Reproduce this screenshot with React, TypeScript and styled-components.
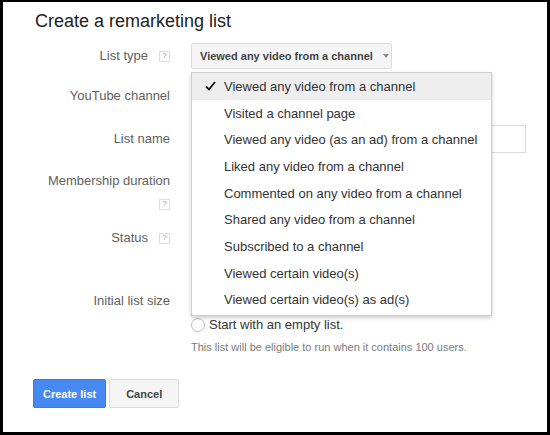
import React from "react";
import styled, { createGlobalStyle } from "styled-components";

const GlobalStyle = createGlobalStyle`
  html, body {
    margin: 0;
    padding: 0;
    background: #000;
  }
  body {
    font-family: "Liberation Sans", Arial, sans-serif;
  }
`;

const Frame = styled.div`
  width: 550px;
  height: 435px;
  box-sizing: border-box;
  border-style: solid;
  border-color: #000;
  border-width: 2px 3px 3px 3px;
  background: #fff;
  padding: 8px 0 0 30px;
  display: flex;
  flex-direction: column;
`;

const Title = styled.h1`
  margin: 0 0 0 2px;
  font-size: 18px;
  font-weight: normal;
  line-height: 22px;
  color: #222;
`;

const Row = styled.div<{ $h: number; $mt: number }>`
  display: grid;
  grid-template-columns: 137px 335px;
  column-gap: 21px;
  align-items: center;
  height: ${(p) => p.$h}px;
  margin-top: ${(p) => p.$mt}px;
`;

const Label = styled.div<{ $stack?: boolean }>`
  display: flex;
  flex-direction: ${(p) => (p.$stack ? "column" : "row")};
  align-items: ${(p) => (p.$stack ? "flex-end" : "center")};
  justify-content: flex-end;
  gap: ${(p) => (p.$stack ? "10px" : "11px")};
  font-size: 13px;
  line-height: 16px;
  color: #616161;
  text-align: right;
`;

const Help = styled.span`
  display: inline-flex;
  align-items: center;
  justify-content: center;
  width: 11px;
  height: 11px;
  box-sizing: border-box;
  border: 1px solid #dedede;
  font-size: 8px;
  line-height: 1;
  color: #9a9a9a;
`;

const Field = styled.div`
  position: relative;
  display: flex;
  align-items: center;
  height: 100%;
`;

const Select = styled.div`
  display: inline-flex;
  align-items: center;
  gap: 10px;
  width: 201px;
  height: 26px;
  box-sizing: border-box;
  padding: 0 6px 0 8px;
  border: 1px solid #dcdcdc;
  border-radius: 2px;
  background: #f5f5f5;
  font-size: 11px;
  font-weight: bold;
  color: #444;
  white-space: nowrap;
`;

const Arrow = styled.span`
  width: 0;
  height: 0;
  border-left: 3px solid transparent;
  border-right: 3px solid transparent;
  border-top: 4px solid #8a8a8a;
`;

const Menu = styled.ul`
  position: absolute;
  top: calc(100% + 3px);
  left: 0;
  z-index: 10;
  width: 301px;
  box-sizing: border-box;
  margin: 0;
  padding: 0 0 2px;
  list-style: none;
  background: #fff;
  border: 1px solid #cfcfcf;
  box-shadow: 0 2px 4px rgba(0, 0, 0, 0.2);
`;

const Item = styled.li<{ $active?: boolean }>`
  position: relative;
  display: flex;
  align-items: center;
  height: 26.7px;
  padding-left: 32px;
  font-size: 13px;
  color: #333;
  white-space: nowrap;
  background: ${(p) => (p.$active ? "#eeeeee" : "transparent")};
`;

const Check = styled.svg`
  position: absolute;
  left: 13px;
  top: 8px;
`;

const TextInput = styled.div`
  width: 335px;
  height: 28px;
  box-sizing: border-box;
  border: 1px solid #dcdcdc;
  background: #fff;
`;

const Radio = styled.span`
  width: 14px;
  height: 14px;
  box-sizing: border-box;
  border: 1px solid #bdbdbd;
  border-radius: 50%;
  background: #fff;
  margin-right: 4px;
`;

const RadioText = styled.span`
  font-size: 13px;
  color: #333;
`;

const Hint = styled.div`
  font-size: 11px;
  line-height: 14px;
  color: #7a7a7a;
  white-space: nowrap;
`;

const Buttons = styled.div`
  display: flex;
  gap: 3px;
  margin-top: 25px;
`;

const Button = styled.button<{ $primary?: boolean }>`
  height: 29px;
  padding: 0 9px;
  box-sizing: border-box;
  border-radius: 2px;
  border: 1px solid ${(p) => (p.$primary ? "#3a7be6" : "#dcdcdc")};
  background: ${(p) => (p.$primary ? "#4689f3" : "#f5f5f5")};
  color: ${(p) => (p.$primary ? "#fff" : "#444")};
  font-family: inherit;
  font-size: 11px;
  font-weight: bold;
  min-width: ${(p) => (p.$primary ? "71px" : "70px")};
`;

const options = [
  "Viewed any video from a channel",
  "Visited a channel page",
  "Viewed any video (as an ad) from a channel",
  "Liked any video from a channel",
  "Commented on any video from a channel",
  "Shared any video from a channel",
  "Subscribed to a channel",
  "Viewed certain video(s)",
  "Viewed certain video(s) as ad(s)",
];

export default function App() {
  return (
    <>
      <GlobalStyle />
      <Frame>
        <Title>Create a remarketing list</Title>

        <Row $h={26} $mt={11}>
          <Label>
            List type <Help>?</Help>
          </Label>
          <Field>
            <Select>
              Viewed any video from a channel
              <Arrow />
            </Select>
            <Menu>
              {options.map((o, i) => (
                <Item key={o} $active={i === 0}>
                  {i === 0 && (
                    <Check width="11" height="10" viewBox="0 0 11 10">
                      <path
                        d="M1 5.5 L4 8.5 L10 1"
                        fill="none"
                        stroke="#111"
                        strokeWidth="1.8"
                      />
                    </Check>
                  )}
                  {o}
                </Item>
              ))}
            </Menu>
          </Field>
        </Row>

        <Row $h={26} $mt={14}>
          <Label>YouTube channel</Label>
          <Field />
        </Row>

        <Row $h={28} $mt={16}>
          <Label>List name</Label>
          <Field>
            <TextInput />
          </Field>
        </Row>

        <Row $h={40} $mt={18}>
          <Label $stack>
            Membership duration
            <Help>?</Help>
          </Label>
          <Field />
        </Row>

        <Row $h={24} $mt={15}>
          <Label>
            Status <Help>?</Help>
          </Label>
          <Field />
        </Row>

        <Row $h={24} $mt={39}>
          <Label>Initial list size</Label>
          <Field />
        </Row>

        <Row $h={14} $mt={4}>
          <span />
          <Field>
            <Radio />
            <RadioText>Start with an empty list.</RadioText>
          </Field>
        </Row>

        <Row $h={14} $mt={9}>
          <span />
          <Hint>This list will be eligible to run when it contains 100 users.</Hint>
        </Row>

        <Buttons>
          <Button $primary>Create list</Button>
          <Button>Cancel</Button>
        </Buttons>
      </Frame>
    </>
  );
}
